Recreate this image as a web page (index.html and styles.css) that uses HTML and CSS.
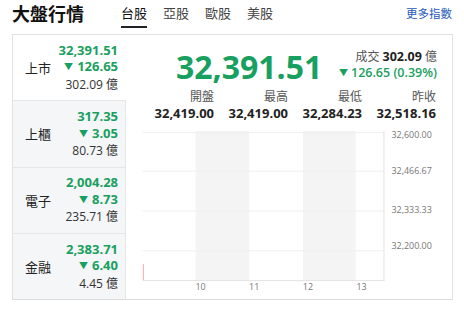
FILE: index.html
```html
<!DOCTYPE html>
<html lang="zh-Hant">
  <head>
    <meta charset="UTF-8" />
    <meta name="viewport" content="width=device-width, initial-scale=1.0" />
    <title>大盤行情</title>
    <link rel="stylesheet" href="styles.css">
  </head>
  <body>
    <div class="header">
      <h1>大盤行情</h1>
      <div class="tabs">
        <span class="tab active">台股</span>
        <span class="tab">亞股</span>
        <span class="tab">歐股</span>
        <span class="tab">美股</span>
      </div>
      <a class="more" href="#">更多指數</a>
    </div>

    <div class="card">
      <div class="markets">
        <div class="market active">
          <span class="name">上市</span>
          <div class="nums">
            <div class="price">32,391.51</div>
            <div class="change"><i class="down">▼</i>126.65</div>
            <div class="volume">302.09 億</div>
          </div>
        </div>
        <div class="market">
          <span class="name">上櫃</span>
          <div class="nums">
            <div class="price">317.35</div>
            <div class="change"><i class="down">▼</i>3.05</div>
            <div class="volume">80.73 億</div>
          </div>
        </div>
        <div class="market">
          <span class="name">電子</span>
          <div class="nums">
            <div class="price">2,004.28</div>
            <div class="change"><i class="down">▼</i>8.73</div>
            <div class="volume">235.71 億</div>
          </div>
        </div>
        <div class="market">
          <span class="name">金融</span>
          <div class="nums">
            <div class="price">2,383.71</div>
            <div class="change"><i class="down">▼</i>6.40</div>
            <div class="volume">4.45 億</div>
          </div>
        </div>
      </div>

      <div class="detail">
        <div class="summary">
          <div class="big">32,391.51</div>
          <div class="side">
            <div class="deal">成交 <b>302.09</b> 億</div>
            <div class="diff"><i class="down">▼</i>126.65 (0.39%)</div>
          </div>
        </div>

        <div class="stats">
          <div class="stat"><span>開盤</span><b>32,419.00</b></div>
          <div class="stat"><span>最高</span><b>32,419.00</b></div>
          <div class="stat"><span>最低</span><b>32,284.23</b></div>
          <div class="stat"><span>昨收</span><b>32,518.16</b></div>
        </div>

        <svg class="chart" width="326" height="179" viewBox="0 0 326 179">
          <rect x="69" y="10" width="54" height="150" fill="#f4f4f4" />
          <rect x="177" y="10" width="53" height="150" fill="#f4f4f4" />
          <g stroke="#efefef" stroke-width="1">
            <line x1="16" y1="11.5" x2="258" y2="11.5" />
            <line x1="16" y1="50.5" x2="258" y2="50.5" />
            <line x1="16" y1="90.5" x2="258" y2="90.5" />
            <line x1="16" y1="130.5" x2="258" y2="130.5" />
          </g>
          <line x1="258.5" y1="10" x2="258.5" y2="161" stroke="#e3e3e3" />
          <line x1="16" y1="160.5" x2="259" y2="160.5" stroke="#e3e3e3" />
          <line x1="16.5" y1="144" x2="16.5" y2="160" stroke="#f0a8a8" />
          <g class="ylabels">
            <text x="266" y="17">32,600.00</text>
            <text x="266" y="53">32,466.67</text>
            <text x="266" y="93">32,333.33</text>
            <text x="266" y="129">32,200.00</text>
          </g>
          <g class="xlabels">
            <text x="74" y="170">10</text>
            <text x="128" y="170">11</text>
            <text x="182" y="170">12</text>
            <text x="236" y="170">13</text>
          </g>
        </svg>
      </div>
    </div>
  </body>
</html>
```

FILE: styles.css
```css
* {
  margin: 0;
  padding: 0;
  box-sizing: border-box;
}

body {
  font-family: "Open Sans", "Noto Sans CJK TC", sans-serif;
  background: #ffffff;
  color: #222;
  width: 464px;
  height: 318px;
  overflow: hidden;
}

.header {
  display: flex;
  align-items: center;
  height: 34px;
  padding: 0 12px;
}

.header h1 {
  font-size: 18px;
  font-weight: 700;
  line-height: 28px;
  color: #111;
  margin-top: -6px;
}

.tabs {
  display: flex;
  gap: 16px;
  margin-left: 37px;
  height: 34px;
}

.tab {
  font-size: 13px;
  line-height: 26px;
  color: #444;
  border-bottom: 2px solid transparent;
  height: 26px;
  box-sizing: content-box;
}

.tab.active {
  color: #111;
  border-bottom-color: #222;
}

.more {
  margin-left: auto;
  font-size: 11.5px;
  color: #1f5bb8;
  text-decoration: none;
  margin-top: -8px;
}

.card {
  display: flex;
  margin-left: 12px;
  width: 441px;
  height: 266px;
  border: 1px solid #e2e2e2;
  border-bottom: 1px solid #dcdcdc;
}

.markets {
  width: 115px;
  display: flex;
  flex-direction: column;
}

.market {
  flex: 1;
  display: flex;
  align-items: center;
  justify-content: space-between;
  padding: 0 7px 0 12px;
  background: #f5f6f8;
  border-top: 1px solid #e6e6e6;
  border-right: 1px solid #e6e6e6;
}

.market.active {
  background: #ffffff;
  border-top: none;
  border-right-color: transparent;
}

.name {
  font-size: 13px;
  color: #222;
}

.nums {
  text-align: right;
  line-height: 16.5px;
}

.price,
.change {
  font-size: 13px;
  font-weight: 700;
  color: #18a060;
}

.down {
  font-style: normal;
  font-size: 9px;
  margin-right: 4px;
  position: relative;
  top: -1px;
}

.volume {
  font-size: 12px;
  color: #333;
}

.detail {
  flex: 1;
  display: flex;
  flex-direction: column;
}

.summary {
  display: flex;
  align-items: flex-start;
  justify-content: space-between;
  padding: 12px 15px 0 50px;
}

.big {
  font-size: 32px;
  font-weight: 700;
  line-height: 40px;
  color: #18a060;
}

.side {
  text-align: right;
  line-height: 16px;
  margin-top: 2px;
}

.deal {
  font-size: 12px;
  color: #555;
}

.deal b {
  color: #222;
  font-size: 12.5px;
}

.diff {
  font-size: 12.5px;
  font-weight: 600;
  color: #18a060;
}

.diff .down {
  margin-right: 3px;
}

.stats {
  display: grid;
  grid-template-columns: repeat(4, 74px);
  padding-left: 14px;
  margin-top: 2px;
}

.stat {
  display: flex;
  flex-direction: column;
  align-items: flex-end;
  line-height: 16px;
}

.stat span {
  font-size: 12px;
  color: #555;
}

.stat b {
  font-size: 13px;
  color: #222;
}

.chart {
  display: block;
}

.ylabels text {
  font-size: 9px;
  fill: #777;
  font-family: "Open Sans", sans-serif;
}

.xlabels text {
  font-size: 9px;
  fill: #777;
  text-anchor: middle;
  font-family: "Open Sans", sans-serif;
}
```
